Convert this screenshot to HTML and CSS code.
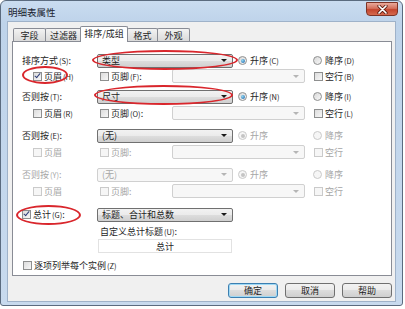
FILE: index.html
```html
<!DOCTYPE html>
<html lang="zh">
<head>
    <meta charset="UTF-8">
    <title>明细表属性</title>
    <link rel="stylesheet" href="styles.css">
</head>
<body>
    <div class="window">
        <div class="titlebar">
            <span class="title">明细表属性</span>
            <div class="close">
                <svg width="11" height="9" viewBox="0 0 11 9"><path d="M2 1 L9 8 M9 1 L2 8" stroke="#5a1a10" stroke-width="3.2" stroke-linecap="round"/><path d="M2 1 L9 8 M9 1 L2 8" stroke="#fff" stroke-width="1.7" stroke-linecap="round"/></svg>
            </div>
        </div>
        <div class="client">
            <div class="tabs">
                <div class="tab w1">字段</div>
                <div class="tab w2">过滤器</div>
                <div class="tab active w3">排序/成组</div>
                <div class="tab w4">格式</div>
                <div class="tab w5">外观</div>
            </div>
            <div class="panel">
                <div class="grp first">
                    <div class="row sel-row">
                        <span class="lbl">排序方式<span class="k">(S)</span>:</span>
                        <div class="sel main"><span>类型</span><i class="arr"></i></div>
                        <span class="opt asc"><span class="rd on"></span>升序<span class="k">(C)</span></span>
                        <span class="opt"><span class="rd"></span>降序<span class="k">(D)</span></span>
                    </div>
                    <div class="row cb-row">
                        <span class="opt hdr"><span class="cb on"></span>页眉<span class="k">(H)</span></span>
                        <span class="opt ftr"><span class="cb"></span>页脚<span class="k">(F)</span>:</span>
                        <div class="sel sub off"><i class="arr"></i></div>
                        <span class="opt"><span class="cb"></span>空行<span class="k">(B)</span></span>
                    </div>
                </div>
                <div class="grp">
                    <div class="row sel-row">
                        <span class="lbl">否则按<span class="k">(T)</span>:</span>
                        <div class="sel main"><span>尺寸</span><i class="arr"></i></div>
                        <span class="opt asc"><span class="rd on"></span>升序<span class="k">(N)</span></span>
                        <span class="opt"><span class="rd"></span>降序<span class="k">(I)</span></span>
                    </div>
                    <div class="row cb-row">
                        <span class="opt hdr"><span class="cb"></span>页眉<span class="k">(R)</span></span>
                        <span class="opt ftr"><span class="cb"></span>页脚<span class="k">(O)</span>:</span>
                        <div class="sel sub off"><i class="arr"></i></div>
                        <span class="opt"><span class="cb"></span>空行<span class="k">(L)</span></span>
                    </div>
                </div>
                <div class="grp">
                    <div class="row sel-row">
                        <span class="lbl">否则按<span class="k">(E)</span>:</span>
                        <div class="sel main"><span>(无)</span><i class="arr"></i></div>
                        <span class="opt asc dis"><span class="rd on"></span>升序</span>
                        <span class="opt dis"><span class="rd"></span>降序</span>
                    </div>
                    <div class="row cb-row dis">
                        <span class="opt hdr"><span class="cb"></span>页眉</span>
                        <span class="opt ftr"><span class="cb"></span>页脚:</span>
                        <div class="sel sub off"><i class="arr"></i></div>
                        <span class="opt"><span class="cb"></span>空行</span>
                    </div>
                </div>
                <div class="grp">
                    <div class="row sel-row dis">
                        <span class="lbl">否则按<span class="k">(Y)</span>:</span>
                        <div class="sel main off"><span>(无)</span><i class="arr"></i></div>
                        <span class="opt asc"><span class="rd on"></span>升序</span>
                        <span class="opt"><span class="rd"></span>降序</span>
                    </div>
                    <div class="row cb-row dis">
                        <span class="opt hdr"><span class="cb"></span>页眉</span>
                        <span class="opt ftr"><span class="cb"></span>页脚:</span>
                        <div class="sel sub off"><i class="arr"></i></div>
                        <span class="opt"><span class="cb"></span>空行</span>
                    </div>
                </div>
                <div class="row sel-row total">
                    <span class="lbl"><span class="cb on"></span>总计<span class="k">(G)</span>:</span>
                    <div class="sel main"><span>标题、合计和总数</span><i class="arr"></i></div>
                </div>
                <div class="row caption">自定义总计标题<span class="k">(U)</span>:</div>
                <div class="row">
                    <div class="field">总计</div>
                </div>
                <div class="row each">
                    <span class="opt"><span class="cb"></span>逐项列举每个实例<span class="k">(Z)</span></span>
                </div>
            </div>
            <div class="buttons">
                <div class="btn def">确定</div>
                <div class="btn">取消</div>
                <div class="btn">帮助</div>
            </div>
        </div>
    </div>

    <div class="ring r1"></div>
    <div class="ring r2"></div>
    <div class="ring r3"></div>
    <div class="ring r4"></div>
</body>
</html>
```

FILE: styles.css
```css
body {
    margin: 0;
    position: relative;
    background: #fff;
    font-family: "Noto Sans CJK SC", "DejaVu Sans", sans-serif;
    font-size: 9px;
    color: #1e1e1e;
}
.window {
    box-sizing: border-box;
    width: 403px;
    height: 306px;
    border: 1px solid #5b6b7f;
    border-radius: 6px 6px 3px 3px;
    background: linear-gradient(#cadcf0, #bed3ea 22px, #c8daee);
    padding: 0 6px 3px 6px;
}
.titlebar {
    height: 20px;
    display: flex;
    align-items: flex-start;
    position: relative;
}
.title {
    margin-top: 4px;
    margin-left: 1px;
    font-size: 9.5px;
    color: #1a2330;
}
.close {
    position: absolute;
    right: -2px;
    top: 1px;
    width: 32px;
    height: 14px;
    box-sizing: border-box;
    border: 1px solid #7d3326;
    border-radius: 0 0 4px 4px;
    background: linear-gradient(#e9a99b, #d4705c 45%, #c4452e 55%, #d56a4f);
    display: flex;
    align-items: center;
    justify-content: center;
}
.client {
    box-sizing: border-box;
    width: 389px;
    height: 281px;
    border: 1px solid #9fb2c9;
    background: #f0f0f0;
    padding: 4px 3px 0 4px;
}
.tabs {
    display: flex;
    align-items: flex-end;
    height: 15px;
    padding-left: 1px;
    position: relative;
    z-index: 1;
}
.tab {
    box-sizing: border-box;
    height: 13px;
    border: 1px solid #898c95;
    border-bottom: none;
    border-radius: 2px 2px 0 0;
    background: linear-gradient(#f3f3f3, #e6e6e6 50%, #dadada);
    display: flex;
    align-items: center;
    justify-content: center;
    margin-right: -1px;
}
.tab.active {
    height: 16px;
    margin: 0 -1px -1px -1px;
    background: #fff;
    position: relative;
    z-index: 2;
    padding-bottom: 2px;
}
.w1 { width: 33px; }
.w2 { width: 37px; }
.w3 { width: 48px; }
.w4 { width: 31px; }
.w5 { width: 33px; }
.panel {
    box-sizing: border-box;
    width: 380px;
    height: 235px;
    border: 1px solid #898c95;
    background: #fff;
    padding: 11px 0 0 9px;
}
.k {
    font-size: 7.5px;
    margin-left: 1px;
}
.grp {
    height: 39px;
}
.grp.first {
    height: 36px;
}
.row {
    display: flex;
    align-items: center;
}
.sel-row {
    height: 15px;
}
.cb-row {
    height: 14px;
    margin-top: 2px;
    padding-left: 11px;
}
.grp.first .cb-row {
    margin-top: 1px;
}
.lbl {
    width: 75px;
    display: flex;
    align-items: center;
}
.opt {
    display: flex;
    align-items: center;
    white-space: nowrap;
}
.asc { width: 75px; }
.hdr { width: 67px; }
.ftr { width: 72px; }
.dis { color: #a6a6a6; }
.dis .cb, .dis .rd { border-color: #cacaca; background: #f6f6f6; }
.dis .rd.on::after { background: #c4c4c4; }

.sel {
    box-sizing: border-box;
    height: 14px;
    border: 1px solid #707070;
    border-radius: 2px;
    background: linear-gradient(#f2f2f2, #ebebeb 48%, #dddddd 52%, #cfcfcf);
    display: flex;
    align-items: center;
    padding-left: 4px;
}
.sel.main {
    width: 136px;
    margin-right: 5px;
}
.sel.sub {
    width: 133px;
    margin-right: 9px;
}
.sel.off {
    border-color: #d0d0d0;
    background: #f7f7f7;
    color: #a6a6a6;
}
.arr {
    margin-left: auto;
    margin-right: 5px;
    width: 0;
    height: 0;
    border-left: 3px solid transparent;
    border-right: 3px solid transparent;
    border-top: 3px solid #1a1a1a;
}
.off .arr {
    border-top-color: #b5b5b5;
}
.cb {
    box-sizing: border-box;
    width: 9px;
    height: 9px;
    border: 1px solid #8e8f8f;
    background: linear-gradient(135deg, #dcdcdc, #f7f7f7);
    margin-right: 2px;
    position: relative;
    flex: none;
}
.cb.on::after {
    content: "";
    position: absolute;
    left: 2px;
    top: -1px;
    width: 2px;
    height: 5px;
    border-right: 1.5px solid #2f3f7a;
    border-bottom: 1.5px solid #2f3f7a;
    transform: rotate(40deg);
}
.rd {
    box-sizing: border-box;
    width: 9px;
    height: 9px;
    border: 1px solid #8e8f8f;
    border-radius: 50%;
    background: linear-gradient(135deg, #d8d8d8, #f8f8f8);
    margin-right: 3px;
    position: relative;
    flex: none;
}
.rd.on::after {
    content: "";
    position: absolute;
    left: 1.5px;
    top: 1.5px;
    width: 4px;
    height: 4px;
    border-radius: 50%;
    background: radial-gradient(circle at 35% 35%, #8fd6f0, #1a5fa8);
}
.total {
    margin-top: 1px;
}
.total .lbl {
    margin-left: 0;
}
.caption {
    height: 15px;
    margin-top: 2px;
    padding-left: 78px;
}
.field {
    box-sizing: border-box;
    width: 134px;
    height: 14px;
    margin-left: 76px;
    border: 1px solid #e2e2e2;
    background: #fff;
    display: flex;
    align-items: center;
    justify-content: center;
}
.each {
    height: 14px;
    margin-top: 5px;
    padding-left: 1px;
}
.buttons {
    display: flex;
    justify-content: flex-end;
    gap: 7px;
    margin-top: 7px;
    padding-right: 0;
    width: 380px;
}
.btn {
    box-sizing: border-box;
    width: 50px;
    height: 15px;
    border: 1px solid #707070;
    border-radius: 3px;
    background: linear-gradient(#f2f2f2, #ebebeb 45%, #dddddd 50%, #cfcfcf);
    display: flex;
    align-items: center;
    justify-content: center;
}
.btn.def {
    border-color: #3c7fb1;
    box-shadow: inset 0 0 0 1px #9fd9f5;
}
.ring {
    position: absolute;
    box-sizing: border-box;
    border: 2px solid #d9262c;
    border-radius: 50%;
}
.r1 { left: 92px; top: 50px; width: 146px; height: 20px; }
.r2 { left: 22px; top: 66px; width: 46px; height: 18px; }
.r3 { left: 94px; top: 85px; width: 139px; height: 20px; }
.r4 { left: 16px; top: 205px; width: 65px; height: 20px; }
```
